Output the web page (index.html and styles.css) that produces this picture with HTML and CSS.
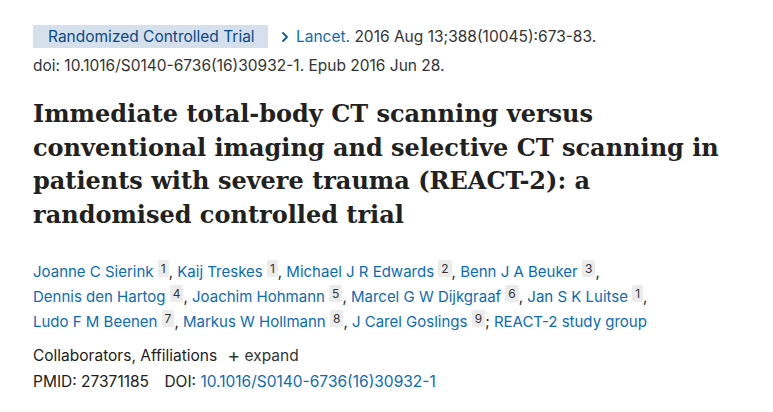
FILE: index.html
```html
<!DOCTYPE html>
<html>
<head>
<meta charset="utf-8">
<link rel="stylesheet" href="styles.css">
</head>
<body>
<main class="article">
  <div class="cit-row">
    <span class="badge">Randomized Controlled Trial</span>
    <span class="journal">
      <svg class="chev" width="10" height="12" viewBox="0 0 10 12"><path d="M3 2 L7 6 L3 10" fill="none" stroke="#0b5d9e" stroke-width="1.8" stroke-linecap="round" stroke-linejoin="round"/></svg>
      <a class="link">Lancet.</a> 2016 Aug 13;388(10045):673-83.
    </span>
  </div>
  <div class="doi-line">doi: 10.1016/S0140-6736(16)30932-1. Epub 2016 Jun 28.</div>
  <h1 class="title">Immediate total-body CT scanning versus conventional imaging and selective CT scanning in patients with severe trauma (REACT-2): a randomised controlled trial</h1>
  <div class="authors">
    <a class="link">Joanne C Sierink</a> <sup class="aff">1</sup>, <a class="link">Kaij Treskes</a> <sup class="aff">1</sup>, <a class="link">Michael J R Edwards</a> <sup class="aff">2</sup>, <a class="link">Benn J A Beuker</a> <sup class="aff">3</sup>,<br>
    <a class="link">Dennis den Hartog</a> <sup class="aff">4</sup>, <a class="link">Joachim Hohmann</a> <sup class="aff">5</sup>, <a class="link">Marcel G W Dijkgraaf</a> <sup class="aff">6</sup>, <a class="link">Jan S K Luitse</a> <sup class="aff">1</sup>,<br>
    <a class="link">Ludo F M Beenen</a> <sup class="aff">7</sup>, <a class="link">Markus W Hollmann</a> <sup class="aff">8</sup>, <a class="link">J Carel Goslings</a> <sup class="aff">9</sup>; <a class="link">REACT-2 study group</a>
  </div>
  <div class="collab">Collaborators, Affiliations <span class="expand"><span class="plus">+</span> expand</span></div>
  <div class="ids">PMID: 27371185 <span class="doi-label">DOI: <a class="link">10.1016/S0140-6736(16)30932-1</a></span></div>
</main>
</body>
</html>
```
FILE: styles.css
```css
html, body {
  margin: 0;
  padding: 0;
  background: #ffffff;
}
body {
  font-family: Inter, "Noto Sans", "Liberation Sans", sans-serif;
  color: #212121;
  font-size: 15.5px;
}
.article {
  padding: 25px 33px 0 33px;
  width: 720px;
}
.link {
  color: #0a6bb5;
  text-decoration: none;
}
.cit-row {
  display: flex;
  align-items: center;
  height: 23px;
}
.badge {
  background: #d5e0ec;
  color: #0b4a84;
  height: 23px;
  line-height: 23px;
  padding: 0 13px 0 15px;
  white-space: nowrap;
}
.journal {
  margin-left: 12px;
  color: #333;
  white-space: nowrap;
}
.chev {
  vertical-align: -1px;
  margin-right: 2px;
}
.doi-line {
  margin-top: 7px;
  line-height: 22px;
  color: #333;
}
.title {
  font-family: "DejaVu Serif", "Liberation Serif", serif;
  font-weight: bold;
  font-size: 24px;
  line-height: 33.7px;
  color: #212121;
  margin: 20px 0 0 0;
  width: 700px;
}
.authors {
  margin-top: 27px;
  line-height: 25px;
  font-size: 15px;
  white-space: nowrap;
}
.aff {
  font-size: 12px;
  background: #ebebeb;
  color: #333;
  padding: 1px 3px;
  border-radius: 2px;
  vertical-align: 4px;
  line-height: 1;
}
.collab {
  margin-top: 9px;
  line-height: 26px;
}
.expand {
  margin-left: 6px;
  color: #333;
}
.plus {
  font-size: 19px;
  vertical-align: -1px;
}
.ids {
  line-height: 26px;
}
.doi-label {
  margin-left: 11px;
}
```
